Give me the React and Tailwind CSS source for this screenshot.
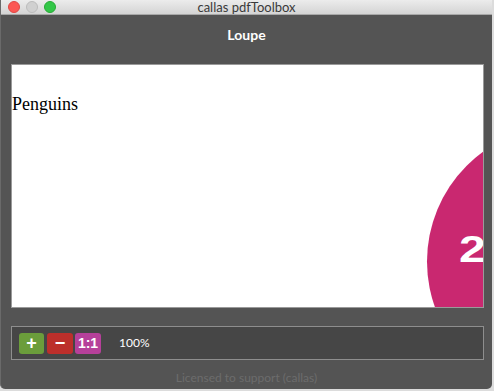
export default function App() {
  return (
    <div className="w-[494px] h-[391px] bg-[#dcdcdc] overflow-hidden">
      <div className="w-[492px] h-[389px] flex flex-col bg-[#545454] rounded-b-[5px] overflow-hidden border-l border-[#6a6a6a] font-['Liberation_Sans',sans-serif]">
        {/* title bar */}
        <div className="relative h-[15px] shrink-0 bg-gradient-to-b from-[#ececec] to-[#d4d4d4] border-b border-[#a8a8a8] flex items-center justify-center">
          <div className="absolute left-[7px] top-[1px] flex gap-[6px]">
            <span className="w-[12px] h-[12px] rounded-full bg-[#fc5753] border border-[#df4744]" />
            <span className="w-[12px] h-[12px] rounded-full bg-[#d0d0d0] border border-[#bcbcbc]" />
            <span className="w-[12px] h-[12px] rounded-full bg-[#33c748] border border-[#27aa35]" />
          </div>
          <span className="text-[13px] leading-none text-[#3a3a3a] font-['Lato',sans-serif]">callas pdfToolbox</span>
        </div>

        {/* header */}
        <div className="h-[49px] shrink-0 flex items-center justify-center pb-[9px]">
          <span className="text-[14px] leading-none font-bold text-white font-['Lato',sans-serif]">Loupe</span>
        </div>

        {/* loupe canvas */}
        <div className="ml-[10px] w-[473px] h-[244px] shrink-0 border border-[#9a9a9a] bg-white relative overflow-hidden">
          <div className="pt-[29px] text-[18px] leading-[20px] text-black font-['Liberation_Serif',serif]">Penguins</div>
          <div className="absolute left-[415px] top-[61px] w-[271px] h-[271px] rounded-full bg-[#c92870]" />
          <div className="absolute left-[447px] top-[166px] text-[37px] leading-[37px] font-bold text-white font-['Liberation_Sans',sans-serif] scale-x-[1.3] origin-left">2</div>
        </div>

        {/* toolbar */}
        <div className="ml-[10px] mt-[18px] w-[473px] h-[34px] shrink-0 border border-[#8e8e8e] bg-[#464646] flex items-center pl-[7px]">
          <button className="w-[25px] h-[21px] rounded-[3px] bg-[#6b9d3b] text-white font-bold text-[18px] leading-none flex items-center justify-center">+</button>
          <button className="ml-[3px] w-[26px] h-[21px] rounded-[3px] bg-[#bc2f2b] text-white font-bold text-[18px] leading-none flex items-center justify-center">−</button>
          <button className="ml-[2px] w-[26px] h-[21px] rounded-[3px] bg-[#b6409a] text-white font-bold text-[14px] leading-none flex items-center justify-center">1:1</button>
          <span className="ml-[18px] text-[12px] text-white font-['Lato',sans-serif]">100%</span>
        </div>

        {/* footer */}
        <div className="flex-1 flex items-end justify-center pb-[2px]">
          <span className="text-[12px] text-[#6c6c6c] font-['Lato',sans-serif]">Licensed to support (callas)</span>
        </div>
      </div>
    </div>
  );
}
